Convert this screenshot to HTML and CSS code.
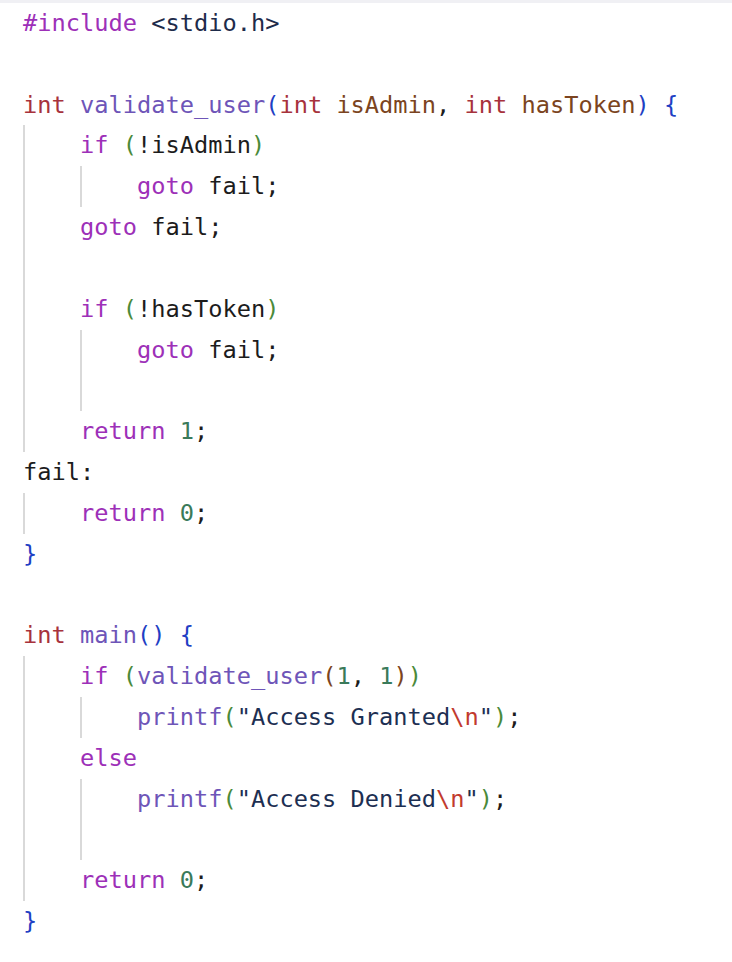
FILE: index.html
```html
<!DOCTYPE html>
<html>
<head>
<meta charset="utf-8">
<link rel="stylesheet" href="styles.css">
</head>
<body>
<div class="editor">
<div class="ln"><span class="c"><span class="kw">#include</span> <span class="hdr">&lt;stdio.h&gt;</span></span></div>
<div class="ln"></div>
<div class="ln"><span class="c"><span class="ty">int</span> <span class="fn">validate_user</span><span class="b1">(</span><span class="ty">int</span> <span class="pa">isAdmin</span>, <span class="ty">int</span> <span class="pa">hasToken</span><span class="b1">)</span> <span class="b1">{</span></span></div>
<div class="ln"><span class="g"></span><span class="c"><span class="kw">if</span> <span class="b2">(</span>!isAdmin<span class="b2">)</span></span></div>
<div class="ln"><span class="g"></span><span class="g"></span><span class="c"><span class="kw">goto</span> fail;</span></div>
<div class="ln"><span class="g"></span><span class="c"><span class="kw">goto</span> fail;</span></div>
<div class="ln"><span class="g"></span></div>
<div class="ln"><span class="g"></span><span class="c"><span class="kw">if</span> <span class="b2">(</span>!hasToken<span class="b2">)</span></span></div>
<div class="ln"><span class="g"></span><span class="g"></span><span class="c"><span class="kw">goto</span> fail;</span></div>
<div class="ln"><span class="g"></span><span class="g"></span></div>
<div class="ln"><span class="g"></span><span class="c"><span class="kw">return</span> <span class="nu">1</span>;</span></div>
<div class="ln"><span class="c">fail:</span></div>
<div class="ln"><span class="g"></span><span class="c"><span class="kw">return</span> <span class="nu">0</span>;</span></div>
<div class="ln"><span class="c"><span class="b1">}</span></span></div>
<div class="ln"></div>
<div class="ln"><span class="c"><span class="ty">int</span> <span class="fn">main</span><span class="b1">()</span> <span class="b1">{</span></span></div>
<div class="ln"><span class="g"></span><span class="c"><span class="kw">if</span> <span class="b2">(</span><span class="fn">validate_user</span><span class="b3">(</span><span class="nu">1</span>, <span class="nu">1</span><span class="b3">)</span><span class="b2">)</span></span></div>
<div class="ln"><span class="g"></span><span class="g"></span><span class="c"><span class="fn">printf</span><span class="b2">(</span><span class="st">"Access Granted<span class="es">\n</span>"</span><span class="b2">)</span>;</span></div>
<div class="ln"><span class="g"></span><span class="c"><span class="kw">else</span></span></div>
<div class="ln"><span class="g"></span><span class="g"></span><span class="c"><span class="fn">printf</span><span class="b2">(</span><span class="st">"Access Denied<span class="es">\n</span>"</span><span class="b2">)</span>;</span></div>
<div class="ln"><span class="g"></span><span class="g"></span></div>
<div class="ln"><span class="g"></span><span class="c"><span class="kw">return</span> <span class="nu">0</span>;</span></div>
<div class="ln"><span class="c"><span class="b1">}</span></span></div>
</div>
</body>
</html>
```

FILE: styles.css
```css
html, body {
  margin: 0;
  padding: 0;
  background: #ffffff;
}

.editor {
  border-top: 3px solid #f0f0f4;
  padding-left: 23px;
  font-family: "DejaVu Sans Mono", "Liberation Mono", monospace;
  font-size: 23.67px;
  color: #1c1c1c;
}

.ln {
  display: flex;
  height: 40.84px;
  line-height: 40.84px;
}

.c {
  white-space: pre;
}

.g {
  flex: none;
  width: 4ch;
  box-sizing: border-box;
  border-left: 2px solid #d9d9d9;
}

.kw { color: #9d30b8; }
.hdr { color: #1e2b4a; }
.ty { color: #a7323c; }
.fn { color: #6e55b8; }
.pa { color: #7b4420; }
.nu { color: #3a7a5a; }
.st { color: #1d2f52; }
.es { color: #c23a2e; }
.b1 { color: #1f3fc4; }
.b2 { color: #4a8a3a; }
.b3 { color: #7b4420; }
```
